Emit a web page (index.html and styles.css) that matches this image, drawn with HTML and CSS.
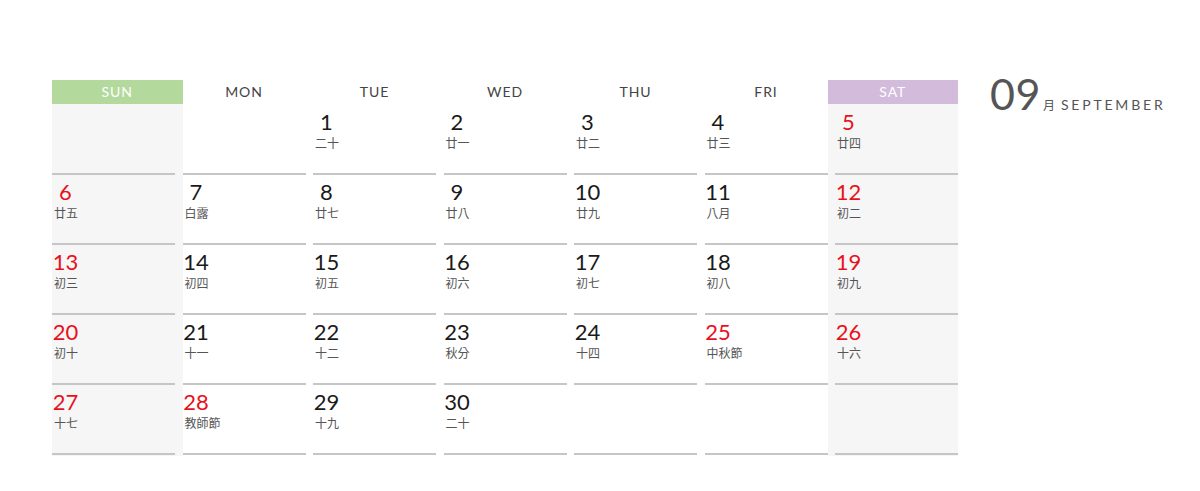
FILE: index.html
```html
<!DOCTYPE html>
<html>

<head>
    <title>September Calendar</title>
    <link rel="stylesheet" href="styles.css">
</head>

<body>

    <div class="page">

        <div class="calendar">
            <div class="head sun">SUN</div>
            <div class="head">MON</div>
            <div class="head">TUE</div>
            <div class="head">WED</div>
            <div class="head">THU</div>
            <div class="head">FRI</div>
            <div class="head sat">SAT</div>

            <!-- week 1 -->
            <div class="cell sun"><div class="box"></div></div>
            <div class="cell"><div class="box blank"></div></div>
            <div class="cell"><div class="box"><span class="num">1</span><span class="lunar">二十</span></div></div>
            <div class="cell"><div class="box"><span class="num">2</span><span class="lunar">廿一</span></div></div>
            <div class="cell"><div class="box"><span class="num">3</span><span class="lunar">廿二</span></div></div>
            <div class="cell"><div class="box"><span class="num">4</span><span class="lunar">廿三</span></div></div>
            <div class="cell sat"><div class="box"><span class="num red">5</span><span class="lunar">廿四</span></div></div>

            <!-- week 2 -->
            <div class="cell sun"><div class="box line"><span class="num red">6</span><span class="lunar">廿五</span></div></div>
            <div class="cell"><div class="box line"><span class="num">7</span><span class="lunar">白露</span></div></div>
            <div class="cell"><div class="box line"><span class="num">8</span><span class="lunar">廿七</span></div></div>
            <div class="cell"><div class="box line"><span class="num">9</span><span class="lunar">廿八</span></div></div>
            <div class="cell"><div class="box line"><span class="num">10</span><span class="lunar">廿九</span></div></div>
            <div class="cell"><div class="box line"><span class="num">11</span><span class="lunar">八月</span></div></div>
            <div class="cell sat"><div class="box line"><span class="num red">12</span><span class="lunar">初二</span></div></div>

            <!-- week 3 -->
            <div class="cell sun"><div class="box line"><span class="num red">13</span><span class="lunar">初三</span></div></div>
            <div class="cell"><div class="box line"><span class="num">14</span><span class="lunar">初四</span></div></div>
            <div class="cell"><div class="box line"><span class="num">15</span><span class="lunar">初五</span></div></div>
            <div class="cell"><div class="box line"><span class="num">16</span><span class="lunar">初六</span></div></div>
            <div class="cell"><div class="box line"><span class="num">17</span><span class="lunar">初七</span></div></div>
            <div class="cell"><div class="box line"><span class="num">18</span><span class="lunar">初八</span></div></div>
            <div class="cell sat"><div class="box line"><span class="num red">19</span><span class="lunar">初九</span></div></div>

            <!-- week 4 -->
            <div class="cell sun"><div class="box line"><span class="num red">20</span><span class="lunar">初十</span></div></div>
            <div class="cell"><div class="box line"><span class="num">21</span><span class="lunar">十一</span></div></div>
            <div class="cell"><div class="box line"><span class="num">22</span><span class="lunar">十二</span></div></div>
            <div class="cell"><div class="box line"><span class="num">23</span><span class="lunar">秋分</span></div></div>
            <div class="cell"><div class="box line"><span class="num">24</span><span class="lunar">十四</span></div></div>
            <div class="cell"><div class="box line"><span class="num red">25</span><span class="lunar">中秋節</span></div></div>
            <div class="cell sat"><div class="box line"><span class="num red">26</span><span class="lunar">十六</span></div></div>

            <!-- week 5 -->
            <div class="cell sun"><div class="box line"><span class="num red">27</span><span class="lunar">十七</span></div></div>
            <div class="cell"><div class="box line"><span class="num red">28</span><span class="lunar">教師節</span></div></div>
            <div class="cell"><div class="box line"><span class="num">29</span><span class="lunar">十九</span></div></div>
            <div class="cell"><div class="box line"><span class="num">30</span><span class="lunar">二十</span></div></div>
            <div class="cell"><div class="box line"></div></div>
            <div class="cell"><div class="box line"></div></div>
            <div class="cell sat"><div class="box line"></div></div>

            <!-- closing lines -->
            <div class="cell sun"><div class="box line last"></div></div>
            <div class="cell"><div class="box line last"></div></div>
            <div class="cell"><div class="box line last"></div></div>
            <div class="cell"><div class="box line last"></div></div>
            <div class="cell"><div class="box line last"></div></div>
            <div class="cell"><div class="box line last"></div></div>
            <div class="cell sat"><div class="box line last"></div></div>
        </div>

        <div class="title">
            <span class="month">09</span>
            <span class="yue">月</span>
            <span class="name">SEPTEMBER</span>
        </div>

    </div>

</body>

</html>
```

FILE: styles.css
```css
body {
    margin: 0;
    background: #fff;
    font-family: "Lato", "Noto Sans CJK TC", sans-serif;
}

.page {
    display: flex;
    align-items: flex-start;
    padding: 80px 0 0 52px;
}

.calendar {
    display: grid;
    grid-template-columns: repeat(7, 123px);
    grid-template-rows: 24px 69px repeat(4, 70px) 3px;
    column-gap: 7.5px;
}

.head {
    display: flex;
    align-items: center;
    justify-content: center;
    padding-bottom: 1px;
    font-size: 14px;
    letter-spacing: 0.9px;
    color: #444;
}

.head.sun {
    background: #b4d99c;
    color: #fff;
    margin-right: -7.5px;
}

.head.sat {
    background: #d3bbdb;
    color: #fff;
    margin-left: -7.5px;
}

.cell {
    display: flex;
}

.cell.sun {
    background: #f6f6f6;
    margin-right: -7.5px;
}

.cell.sat {
    background: #f6f6f6;
    margin-left: -7.5px;
    justify-content: flex-end;
}

.box {
    width: 123px;
    padding-top: 5px;
    box-sizing: border-box;
    display: flex;
    flex-direction: column;
    align-items: flex-start;
}

.box.line {
    border-top: 2px solid #c6c6c6;
    padding-top: 4px;
}

.box.last {
    padding-top: 0;
}

.num {
    display: block;
    min-width: 27px;
    text-align: center;
    font-size: 22px;
    font-weight: 400;
    line-height: 26px;
    color: #1a1a1a;
}

.num.red {
    color: #e8111b;
}

.lunar {
    display: block;
    margin-left: 2px;
    font-family: "Noto Sans CJK TC", sans-serif;
    font-size: 12px;
    line-height: 16px;
    color: #555;
}

.title {
    display: flex;
    align-items: baseline;
    margin-left: 32px;
    margin-top: -11px;
    color: #555;
}

.month {
    font-size: 43px;
    line-height: 50px;
    font-weight: 400;
    letter-spacing: 0.5px;
}

.yue {
    font-family: "Noto Sans CJK TC", sans-serif;
    font-size: 12px;
    margin-left: 2px;
}

.name {
    font-size: 14px;
    letter-spacing: 2.8px;
    margin-left: 6px;
}
```
